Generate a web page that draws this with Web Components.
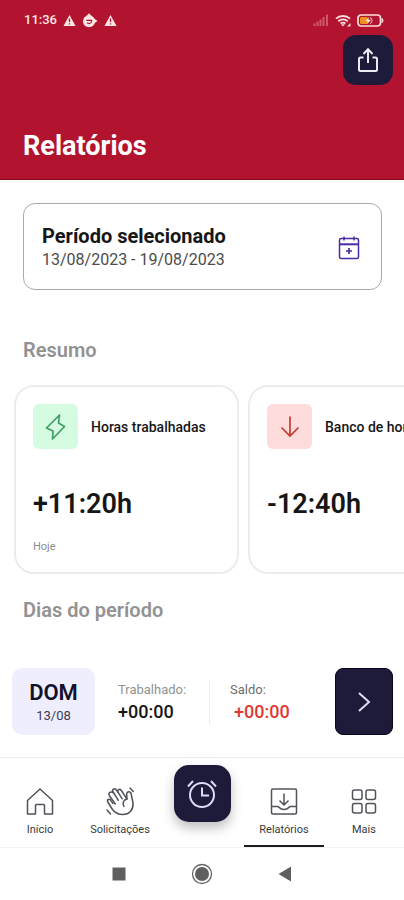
<!DOCTYPE html>
<html lang="pt-BR">
<head>
<meta charset="utf-8">
<meta name="viewport" content="width=device-width, initial-scale=1">
<title>Relatórios</title>
<style>
    body {
        margin: 0;
        background: #ffffff;
        color: #161616;
        font-family: Roboto, "Liberation Sans", sans-serif;
    }
</style>
</head>
<body>
<report-app></report-app>

<script>
const icons = {
    warning: `<svg width="13" height="13" viewBox="0 0 13 13"><path d="M6.500 1 12.500 12H.5z" fill="#ffe6e4"/><path d="M6.500 4.500v3.500M6.500 9.300v1.300" stroke="#b21430" stroke-width="1.300"/></svg>`,
    timer: `<svg width="16" height="15" viewBox="0 0 16 15"><path d="M4.500 3 7 .2 9.500 3M12 5.500 15.500 8 12 10.500" fill="#ffe6e4"/><circle cx="7" cy="8.300" r="6" fill="#ffe6e4"/><path d="M4.300 7.300h5.200v1.200a2.600 2.600 0 0 1-4.500 1.200" fill="none" stroke="#b21430" stroke-width="1.200"/></svg>`,
    signal: `<svg width="16" height="12" viewBox="0 0 16 12"><path d="M1.500 12V9.500M4.500 12V7.500M7.500 12V5.500M10.500 12V3M14 12V.5" stroke="#cf5866" stroke-width="2"/></svg>`,
    wifi: `<svg width="16" height="13" viewBox="0 0 16 13"><path d="M1 4.600a10.500 10.500 0 0 1 14 0M3.300 7.200a7 7 0 0 1 9.400 0M5.600 9.600a3.800 3.800 0 0 1 4.800 0" fill="none" stroke="#ffdcdc" stroke-width="1.900"/><path d="m8 12.500-2-2.300h4z" fill="#ffdcdc"/><path d="M12 12.500 15.500 9v3.500z" fill="#ffdcdc"/></svg>`,
    battery: `<svg width="27" height="13" viewBox="0 0 27 13"><rect x="1" y="1" width="22.500" height="11" rx="3.200" fill="none" stroke="#ffdcdc" stroke-width="1.700"/><path d="M24.500 4c2.500.3 2.500 4.700 0 5z" fill="#ffdcdc"/><rect x="3" y="3" width="8" height="7" rx="1.500" fill="#f0901e"/><path d="M12 3 8.500 7.200H11L10.200 10l3.800-4.300h-2.600z" fill="#fff3d8"/><path d="M13 3.500c2.500.5 2.500 5.500 0 6" fill="none" stroke="#ffdcdc"/></svg>`,
    share: `<svg width="22" height="26" viewBox="0 0 22 26" fill="none" stroke="#ececf4" stroke-width="2"><path d="M11 16V2.500M6.500 7 11 2.300 15.500 7"/><path d="M6.500 10.500h-3Q2 10.500 2 12v10.500Q2 24 3.500 24h15q1.500 0 1.500-1.500V12q0-1.500-1.500-1.500h-3"/></svg>`,
    calendar: `<svg width="22" height="24" viewBox="0 0 22 24" fill="none" stroke="#4a2ba8" stroke-width="1.500"><rect x="1.500" y="2.500" width="19" height="20" rx="1.500"/><path d="M1.500 8.300h19" stroke-width="2"/><path d="M6 .5v4M16 .5v4"/><path d="M11 12v6M8 15h6" stroke-width="1.700"/></svg>`,
    bolt: `<svg width="22" height="28" viewBox="0 0 22 28" fill="none" stroke="#3f9f63" stroke-width="1.700" stroke-linejoin="round"><path d="M14.500 2 1.500 15l6.500 3-.5 8L19.500 13.500 13.500 10z"/></svg>`,
    down: `<svg width="22" height="26" viewBox="0 0 22 26" fill="none" stroke="#c73a30" stroke-width="1.700"><path d="M11 2.500v19.500M2.500 13.500l8.500 8.500 8.500-8.500"/></svg>`,
    next: `<svg width="14" height="22" viewBox="0 0 14 22" fill="none" stroke="#dcdcec" stroke-width="2"><path d="m2 2 10 9L2 20"/></svg>`,
    home: `<svg width="30" height="30" viewBox="0 0 30 30" fill="none" stroke="#50535b" stroke-width="1.500" stroke-linejoin="round"><path d="M2.500 14.500 15 3l12.500 11.500V28h-8v-8.500q0-1-1-1h-7q-1 0-1 1V28h-8z"/></svg>`,
    wave: `<svg width="30" height="30" viewBox="0 0 30 30" fill="none" stroke="#50535b" stroke-width="1.500" stroke-linecap="round" stroke-linejoin="round"><path d="M8 17.500 5.800 14.300C4.500 12.300 1.600 13.600 2.800 16L7.500 23.500c2.500 3.500 6 5 10.500 5 6.500 0 10.500-5 10-11.500l-1.800-9c-.6-3-4.700-3-4.500.4l.3 4.600-5.700-8.500c-1.500-2.200-4.600-.6-3.300 1.700l4.200 6.600"/><path d="M13 6.200 11 3.600C9.500 1.800 6.600 3.400 8 5.700l5.300 8.600M8.900 7.500C6.500 4.500 2.700 6.500 4.300 9.500l6 8.500M22 13c-3.600 1-5 4-3 7.500M25 2l3.300 3.500M2 24l3.500 4"/></svg>`,
    alarm: `<svg width="32" height="32" viewBox="0 0 32 32" fill="none" stroke="#dcdcf4" stroke-width="2"><circle cx="16" cy="17" r="12"/><path d="M16 9.500V17.500h7M2 8.500l5-5.500M25 3l5 5.500"/></svg>`,
    inbox: `<svg width="30" height="30" viewBox="0 0 30 30" fill="none" stroke="#50535b" stroke-width="1.500" stroke-linejoin="round"><rect x="2.500" y="3" width="25" height="25" rx="1.500"/><path d="M15 7.500V19M10.500 14.500 15 19l4.500-4.500M2.500 20.500h6c1.500 0 2 3 6.500 3s5-3 6.500-3h6"/></svg>`,
    grid: `<svg width="30" height="30" viewBox="0 0 30 30" fill="none" stroke="#50535b" stroke-width="1.500"><rect x="3.500" y="4" width="9.500" height="9.500" rx="2"/><rect x="17" y="4" width="9.500" height="9.500" rx="2"/><rect x="3.500" y="17.500" width="9.500" height="9.500" rx="2"/><rect x="17" y="17.500" width="9.500" height="9.500" rx="2"/></svg>`,
    recents: `<svg width="14" height="14" viewBox="0 0 14 14"><path d="M.5.500h13v13H.5z" fill="#5f5f5f"/></svg>`,
    circle: `<svg width="22" height="22" viewBox="0 0 22 22"><circle cx="11" cy="11" r="9.500" fill="none" stroke="#666666" stroke-width="1.300"/><circle cx="11" cy="11" r="7" fill="#5f5f5f"/></svg>`,
    back: `<svg width="14" height="16" viewBox="0 0 14 16"><path d="M13 .5v15L.5 8z" fill="#5f5f5f"/></svg>`
}

// attach an open shadow root filled from a template
function render(el, html){
    const template = document.createElement("template")
    template.innerHTML = html
    el.attachShadow({mode: "open"}).appendChild(template.content.cloneNode(true))
}

class AppIcon extends HTMLElement{
    constructor(){
        super();
        render(this, `
<style>
    :host { display: block; flex: none; }
    svg { display: block; }
</style>
${icons[this.getAttribute("name")]}
`)
    }
}

class StatusBar extends HTMLElement{
    constructor(){
        super();
        render(this, `
<style>
    :host {
        display: flex;
        justify-content: space-between;
        align-items: center;
        height: 16px;
        padding: 0 20px 0 24px;
        color: #ffe6e4;
        font-size: 13px;
        line-height: 16px;
        font-weight: 500;
    }
    div { display: flex; align-items: center; gap: 6px; }
</style>
<div>
    <span>11:36</span>
    <app-icon name="warning"></app-icon>
    <app-icon name="timer"></app-icon>
    <app-icon name="warning"></app-icon>
</div>
<div>
    <app-icon name="signal"></app-icon>
    <app-icon name="wifi"></app-icon>
    <app-icon name="battery"></app-icon>
</div>
`)
    }
}

class ReportHeader extends HTMLElement{
    constructor(){
        super();
        render(this, `
<style>
    :host {
        display: flex;
        flex-direction: column;
        box-sizing: border-box;
        padding: 12px 0 16px;
        background: #b21430;
        border-bottom: 1px solid #7c0c1c;
    }
    button {
        display: grid;
        place-items: center;
        align-self: flex-end;
        width: 50px;
        height: 50px;
        margin: 7px 11px 0 0;
        padding: 0;
        border: 0;
        border-radius: 13px;
        background: #1e1b3a;
    }
    h1 {
        margin: 44px 23px 0;
        color: #ffffff;
        font-size: 27px;
        line-height: 34px;
        font-weight: 700;
    }
</style>
<status-bar></status-bar>
<button aria-label="Compartilhar"><app-icon name="share"></app-icon></button>
<h1><slot></slot></h1>
`)
    }
}

class PeriodPicker extends HTMLElement{
    constructor(){
        super();
        render(this, `
<style>
    :host { display: block; padding: 23px 22px 0 23px; }
    button {
        display: flex;
        align-items: center;
        justify-content: space-between;
        width: 100%;
        padding: 20px 21px 17px 18px;
        border: 1px solid #a9a9a9;
        border-radius: 12px;
        background: #ffffff;
        color: #161616;
        font-family: inherit;
        text-align: left;
    }
    strong, span { display: block; line-height: 24px; }
    strong { font-size: 20px; font-weight: 700; }
    span { color: #4c4c4c; font-size: 16px; }
</style>
<button>
    <div>
        <strong><slot name="label"></slot></strong>
        <span><slot></slot></span>
    </div>
    <app-icon name="calendar"></app-icon>
</button>
`)
    }
}

class SectionTitle extends HTMLElement{
    constructor(){
        super();
        render(this, `
<style>
    :host { display: block; padding: 0 23px; }
    h2 {
        margin: 0;
        color: #929292;
        font-size: 20px;
        line-height: 24px;
        font-weight: 600;
    }
</style>
<h2><slot></slot></h2>
`)
    }
}

class SummaryCard extends HTMLElement{
    constructor(){
        super();
        render(this, `
<style>
    :host {
        display: block;
        flex: none;
        box-sizing: border-box;
        width: 225px;
        min-height: 188px;
        padding: 17px;
        border: 2px solid #ececec;
        border-radius: 20px;
        background: #ffffff;
    }
    .top { display: flex; align-items: center; gap: 13px; }
    .badge {
        display: grid;
        place-items: center;
        width: 45px;
        height: 45px;
        border-radius: 6px;
        background: #d5fbe0;
    }
    :host([tone="bad"]) .badge { background: #ffdcdc; }
    h3 { margin: 0; font-size: 14px; line-height: 16px; font-weight: 500; white-space: nowrap; }
    .value { margin: 37px 0 0; font-size: 27px; line-height: 36px; font-weight: 600; }
    .note { margin: 17px 0 0; color: #8c8c8c; font-size: 11px; line-height: 16px; }
</style>
<div class="top">
    <div class="badge"><app-icon name="${this.getAttribute("icon")}"></app-icon></div>
    <h3><slot name="label"></slot></h3>
</div>
<p class="value"><slot></slot></p>
<p class="note"><slot name="note"></slot></p>
`)
    }
}

class DayRow extends HTMLElement{
    constructor(){
        super();
        render(this, `
<style>
    :host {
        display: flex;
        align-items: center;
        padding: 0 11px 0 12px;
    }
    .day {
        box-sizing: border-box;
        width: 83px;
        height: 67px;
        padding: 12px 0;
        border-radius: 10px;
        background: #efeefe;
        text-align: center;
    }
    .day b { display: block; color: #14122b; font-size: 22px; line-height: 26px; font-weight: 600; }
    .day span { display: block; color: #3c3a4c; font-size: 13px; line-height: 20px; }
    dl { display: flex; flex: 1; margin: 0 0 0 23px; }
    dl div { flex: none; width: 91px; box-sizing: border-box; }
    dl div + div { padding-left: 20px; border-left: 1px solid #ececec; width: 110px; }
    dt { color: #929292; font-size: 13px; line-height: 20px; }
    dd { margin: 0; font-size: 18px; line-height: 24px; font-weight: 500; }
    dl div + div dt { color: #707070; }
    .bad { padding-left: 4px; color: #df3a32; }
    button {
        display: grid;
        place-items: center;
        flex: none;
        width: 58px;
        height: 67px;
        padding: 0;
        border: 1px solid #08061c;
        border-radius: 8px;
        background: #1e1b3a;
    }
</style>
<div class="day"><b><slot name="day"></slot></b><span><slot name="date"></slot></span></div>
<dl>
    <div><dt>Trabalhado:</dt><dd><slot name="worked"></slot></dd></div>
    <div><dt>Saldo:</dt><dd class="bad"><slot name="balance"></slot></dd></div>
</dl>
<button aria-label="Ver dia"><app-icon name="next"></app-icon></button>
`)
    }
}

class NavItem extends HTMLElement{
    constructor(){
        super();
        render(this, `
<style>
    :host { display: block; }
    a {
        display: flex;
        flex-direction: column;
        align-items: center;
        box-sizing: border-box;
        height: 89px;
        padding-top: 28px;
        gap: 6px;
        border-bottom: 2px solid transparent;
        color: #3a3a3a;
        font-size: 11px;
        line-height: 16px;
        text-decoration: none;
    }
    :host([active]) a { border-color: #1c1c22; }
</style>
<a href="#"><app-icon name="${this.getAttribute("icon")}"></app-icon><span><slot></slot></span></a>
`)
    }
}

class TabBar extends HTMLElement{
    constructor(){
        super();
        render(this, `
<style>
    :host { display: block; border-top: 1px solid #ececec; border-bottom: 1px solid #f4f4f4; }
    nav { display: grid; grid-template-columns: 20fr 20fr 21fr 20fr 20fr; }
    button {
        display: grid;
        place-items: center;
        justify-self: center;
        width: 57px;
        height: 57px;
        margin-top: 7px;
        padding: 0;
        border: 0;
        border-radius: 15px;
        background: #1e1b3a;
        box-shadow: 0 6px 12px rgba(0, 0, 0, .25);
    }
</style>
<nav>
    <nav-item icon="home">Início</nav-item>
    <nav-item icon="wave">Solicitações</nav-item>
    <button aria-label="Registrar ponto"><app-icon name="alarm"></app-icon></button>
    <nav-item icon="inbox" active>Relatórios</nav-item>
    <nav-item icon="grid">Mais</nav-item>
</nav>
`)
    }
}

class SystemBar extends HTMLElement{
    constructor(){
        super();
        render(this, `
<style>
    :host { display: flex; justify-content: center; }
    button {
        display: grid;
        place-items: center;
        width: 83px;
        height: 52px;
        padding: 0;
        border: 0;
        background: none;
    }
</style>
<button aria-label="Recentes"><app-icon name="recents"></app-icon></button>
<button aria-label="Tela inicial"><app-icon name="circle"></app-icon></button>
<button aria-label="Voltar"><app-icon name="back"></app-icon></button>
`)
    }
}

class ReportApp extends HTMLElement{
    constructor(){
        super();
        render(this, `
<style>
    :host { display: flex; flex-direction: column; min-height: 100vh; }
    main { flex: 1; padding-bottom: 22px; }
    section-title { margin-top: 48px; }
    .cards { display: flex; gap: 9px; margin-top: 23px; padding-left: 14px; overflow: hidden; }
    .cards + section-title { margin-top: 24px; }
    day-row { margin-top: 46px; }
</style>
<report-header>Relatórios</report-header>
<main>
    <period-picker><span slot="label">Período selecionado</span>13/08/2023 - 19/08/2023</period-picker>
    <section-title>Resumo</section-title>
    <div class="cards">
        <summary-card icon="bolt"><span slot="label">Horas trabalhadas</span>+11:20h<span slot="note">Hoje</span></summary-card>
        <summary-card icon="down" tone="bad"><span slot="label">Banco de horas</span>-12:40h</summary-card>
    </div>
    <section-title>Dias do período</section-title>
    <day-row>
        <span slot="day">DOM</span>
        <span slot="date">13/08</span>
        <span slot="worked">+00:00</span>
        <span slot="balance">+00:00</span>
    </day-row>
</main>
<tab-bar></tab-bar>
<system-bar></system-bar>
`)
    }
}

customElements.define('app-icon', AppIcon);
customElements.define('status-bar', StatusBar);
customElements.define('report-header', ReportHeader);
customElements.define('period-picker', PeriodPicker);
customElements.define('section-title', SectionTitle);
customElements.define('summary-card', SummaryCard);
customElements.define('day-row', DayRow);
customElements.define('nav-item', NavItem);
customElements.define('tab-bar', TabBar);
customElements.define('system-bar', SystemBar);
customElements.define('report-app', ReportApp);
</script>
</body>
</html>
